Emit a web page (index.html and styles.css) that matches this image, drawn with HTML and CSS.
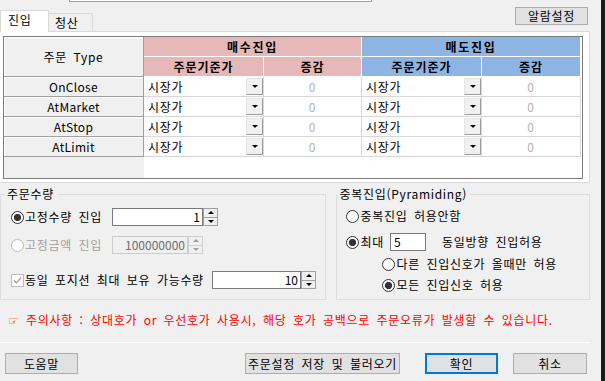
FILE: index.html
```html
<!DOCTYPE html>
<html lang="ko">
<head>
    <meta charset="UTF-8">
    <title>주문설정</title>
    <link rel="stylesheet" href="styles.css">
</head>
<body>
<div class="window">
    <div class="topbar"><div class="topbox"></div></div>

    <div class="tabrow">
        <div class="tab active">진입</div>
        <div class="tab">청산</div>
        <div class="tab-fill">
            <button class="btn alarm">알람설정</button>
        </div>
    </div>

    <div class="page">
        <div class="grid">
            <div class="c-type">주문 Type</div>
            <div class="c-buy">매수진입</div>
            <div class="c-sell">매도진입</div>
            <div class="c-buy sub">주문기준가</div>
            <div class="c-buy sub">증감</div>
            <div class="c-sell sub">주문기준가</div>
            <div class="c-sell sub">증감</div>

            <div class="c-head">OnClose</div>
            <div class="c-price">시장가<span class="drop"></span></div>
            <div class="c-delta">0</div>
            <div class="c-price">시장가<span class="drop"></span></div>
            <div class="c-delta">0</div>

            <div class="c-head">AtMarket</div>
            <div class="c-price">시장가<span class="drop"></span></div>
            <div class="c-delta">0</div>
            <div class="c-price">시장가<span class="drop"></span></div>
            <div class="c-delta">0</div>

            <div class="c-head">AtStop</div>
            <div class="c-price">시장가<span class="drop"></span></div>
            <div class="c-delta">0</div>
            <div class="c-price">시장가<span class="drop"></span></div>
            <div class="c-delta">0</div>

            <div class="c-head">AtLimit</div>
            <div class="c-price">시장가<span class="drop"></span></div>
            <div class="c-delta">0</div>
            <div class="c-price">시장가<span class="drop"></span></div>
            <div class="c-delta">0</div>

            <div class="c-blank"></div>
            <div class="c-empty"></div>
        </div>
    </div>

    <div class="lower">
        <div class="groups">
            <fieldset class="group qty">
                <legend>주문수량</legend>
                <div class="row r1">
                    <span class="label w1"><span class="radio on"></span>고정수량 진입</span>
                    <span class="num n1">1</span>
                    <span class="spin"><span class="up"></span><span class="down"></span></span>
                </div>
                <div class="row r2 disabled">
                    <span class="label w1"><span class="radio off"></span>고정금액 진입</span>
                    <span class="num n2">100000000</span>
                    <span class="spin"><span class="up"></span><span class="down"></span></span>
                </div>
                <div class="row r3">
                    <span class="label w3"><span class="check"><svg width="11" height="11" viewBox="0 0 11 11"><path d="M2 5.5 L4.5 8 L9 2.5" fill="none" stroke="#a6a6a6" stroke-width="1.4"/></svg></span>동일 포지션 최대 보유 가능수량</span>
                    <span class="num n3">10</span>
                    <span class="spin"><span class="up"></span><span class="down"></span></span>
                </div>
            </fieldset>

            <fieldset class="group pyr">
                <legend>중복진입(Pyramiding)</legend>
                <div class="row p1"><span class="radio"></span>중복진입 허용안함</div>
                <div class="row p2">
                    <span class="radio on"></span>최대
                    <span class="num small">5</span>
                    <span class="after">동일방향 진입허용</span>
                </div>
                <div class="row p3 sub"><span class="radio"></span>다른 진입신호가 올때만 허용</div>
                <div class="row p4 sub"><span class="radio on"></span>모든 진입신호 허용</div>
            </fieldset>
        </div>

        <div class="notice"><span class="hand">☞</span> 주의사항 : 상대호가 or 우선호가 사용시, 해당 호가 공백으로 주문오류가 발생할 수 있습니다.</div>
    </div>

    <div class="actions">
        <button class="btn help">도움말</button>
        <button class="btn save">주문설정 저장 및 불러오기</button>
        <button class="btn ok">확인</button>
        <button class="btn cancel">취소</button>
    </div>
</div>
</body>
</html>
```

FILE: styles.css
```css
* {
    box-sizing: border-box;
}

html, body {
    margin: 0;
}

body {
    width: 605px;
    height: 381px;
    overflow: hidden;
    background: #1c1c1c;
    font-family: "Noto Sans CJK KR", "Noto Sans", sans-serif;
    font-size: 12px;
    line-height: 14px;
    letter-spacing: 0.7px;
    word-spacing: 2.5px;
    color: #000;
}

.window {
    width: 601px;
    height: 381px;
    background: #f0f0f0;
}

/* top strip */
.topbar {
    height: 3px;
}

.topbox {
    margin-left: 69px;
    width: 303px;
    height: 2px;
    background: #fff;
    border: 1px solid #a0a0a0;
    border-top: 0;
}

/* tabs */
.tabrow {
    width: 590px;
    height: 29px;
    display: flex;
    align-items: flex-end;
}

.tab {
    height: 19px;
    width: 44px;
    padding: 2px 0 0 6px;
    background: #f0f0f0;
    border: 1px solid #d9d9d9;
    border-left: 0;
}

.tab.active {
    height: 22px;
    width: 49px;
    padding-left: 7px;
    background: #fff;
    border-left: 1px solid #d9d9d9;
    border-bottom: 0;
}

.tab-fill {
    flex: 1;
    align-self: stretch;
    display: flex;
    justify-content: flex-end;
    align-items: flex-start;
    padding: 4px 2px 0 0;
    border-bottom: 1px solid #d9d9d9;
}

.btn {
    font: inherit;
    letter-spacing: inherit;
    word-spacing: inherit;
    color: #000;
    background: #e1e1e1;
    border: 1px solid #adadad;
    padding: 0;
    height: 21px;
}

.alarm {
    width: 73px;
    height: 18px;
    line-height: 14px;
}

/* tab page with grid */
.page {
    width: 590px;
    height: 151px;
    padding: 4px 0 0 3px;
    background: #fff;
    border-right: 1px solid #d9d9d9;
    border-bottom: 1px solid #d9d9d9;
}

.grid {
    width: 580px;
    height: 143px;
    border: 1px solid #7c7c7c;
    background: #fff;
    display: grid;
    grid-template-columns: 140px 120px 98px 120px 99px;
    grid-template-rows: 20px 20px repeat(4, 20px) 1fr;
}

.grid > div {
    display: flex;
    align-items: center;
    justify-content: center;
}

.c-type {
    grid-row: span 2;
    background: #f0f0f0;
    border-right: 1px solid #a0a0a0;
    border-bottom: 1px solid #a0a0a0;
    box-shadow: inset 1px 1px 0 #fff;
}

.c-buy, .c-sell {
    grid-column: span 2;
    font-weight: bold;
    letter-spacing: 1.7px;
    border-right: 1px solid #fff;
    border-bottom: 1px solid #fff;
}

.c-buy {
    background: #e6b8b7;
}

.c-sell {
    background: #8db4e2;
}

.c-buy.sub, .c-sell.sub {
    grid-column: span 1;
    letter-spacing: 1px;
}

.c-head {
    background: #f0f0f0;
    border-right: 1px solid #a0a0a0;
    border-bottom: 1px solid #a0a0a0;
    box-shadow: inset 1px 1px 0 #fff;
    letter-spacing: 0.3px;
}

.grid > .c-price {
    justify-content: space-between;
    padding: 1px 0 1px 4px;
    border-right: 1px solid #d8d8d8;
    border-bottom: 1px solid #d8d8d8;
}

.drop {
    width: 17px;
    height: 17px;
    display: flex;
    align-items: center;
    justify-content: center;
    background: #f0f0f0;
    border: 1px solid;
    border-color: #e6e6e6 #9c9c9c #9c9c9c #e6e6e6;
}

.drop::after {
    content: "";
    border-left: 3px solid transparent;
    border-right: 3px solid transparent;
    border-top: 3px solid #000;
}

.c-delta {
    color: #b4b4b4;
    border-right: 1px solid #d8d8d8;
    border-bottom: 1px solid #d8d8d8;
}

.c-blank {
    background: #f0f0f0;
}

.c-empty {
    grid-column: span 4;
}

/* lower settings */
.lower {
    width: 590px;
    height: 160px;
    padding-top: 4px;
    border-bottom: 1px solid #fff;
}

.groups {
    display: flex;
}

.group {
    margin: 0;
    padding: 0;
    height: 113px;
    border: 1px solid #dcdcdc;
}

.group legend {
    padding: 0 3px 0 2px;
}

.qty {
    width: 327px;
}

.qty legend {
    margin-left: 4px;
}

.pyr {
    width: 254px;
    margin-left: 10px;
}

.row {
    display: flex;
    align-items: center;
}

.label {
    display: flex;
    align-items: center;
}

.w1 {
    width: 101px;
}

.w3 {
    width: 201px;
}

.qty .row {
    height: 18px;
    margin-left: 10px;
}

.r1 { margin-top: 7px; }
.r2 { margin-top: 10px; }
.r3 { margin-top: 17px; }

.radio {
    width: 13px;
    height: 13px;
    margin-right: 1px;
    border-radius: 50%;
    border: 1px solid #333;
    background: #fff;
    flex: none;
}

.radio.on {
    background: radial-gradient(circle, #333 0 3.3px, #fff 3.9px);
}

.radio.off {
    border-color: #bcbcbc;
}

.check {
    width: 13px;
    height: 13px;
    margin-right: 1px;
    border: 1px solid #bcbcbc;
    background: #fff;
    display: flex;
}

.disabled {
    color: #a0a0a0;
}

.num {
    height: 18px;
    border: 1px solid #7a7a7a;
    background: #fff;
    text-align: right;
    padding: 1px 2px 0 0;
    color: #000;
    letter-spacing: 0;
}

.n1 { width: 91px; }

.n2 {
    width: 76px;
    background: #f0f0f0;
    border-color: #cccccc;
    color: #6d6d6d;
}

.n3 { width: 89px; }

.spin {
    width: 15px;
    height: 18px;
    display: flex;
    flex-direction: column;
}

.spin span {
    flex: 1;
    display: flex;
    align-items: center;
    justify-content: center;
    background: #f0f0f0;
    border: 1px solid #a0a0a0;
}

.spin .down {
    border-top: 0;
}

.spin .up::after {
    content: "";
    border-left: 3px solid transparent;
    border-right: 3px solid transparent;
    border-bottom: 3px solid #000;
}

.spin .down::after {
    content: "";
    border-left: 3px solid transparent;
    border-right: 3px solid transparent;
    border-top: 3px solid #000;
}

.disabled .spin span {
    border-color: #d0d0d0;
}

.disabled .spin .up::after {
    border-bottom-color: #a0a0a0;
}

.disabled .spin .down::after {
    border-top-color: #a0a0a0;
}

.pyr .row {
    margin-left: 9px;
}

.p1 { margin-top: 8px; }
.p2 { margin-top: 10px; }
.p3 { margin-top: 6px; }
.p4 { margin-top: 7px; }

.pyr .row.sub {
    margin-left: 45px;
}

.num.small {
    width: 36px;
    margin-left: 6px;
    text-align: left;
    padding-left: 3px;
}

.after {
    margin-left: 16px;
}

.notice {
    margin-top: 13px;
    padding-left: 8px;
    color: #ff0000;
}

.hand {
    font-family: "DejaVu Sans", sans-serif;
}

/* bottom buttons */
.actions {
    display: flex;
    padding: 10px 14px 0 5px;
}

.help {
    width: 73px;
}

.save {
    width: 155px;
    margin-left: auto;
}

.ok {
    width: 73px;
    margin-left: 25px;
    border: 2px solid #0078d7;
}

.cancel {
    width: 74px;
    margin-left: 15px;
}
```
